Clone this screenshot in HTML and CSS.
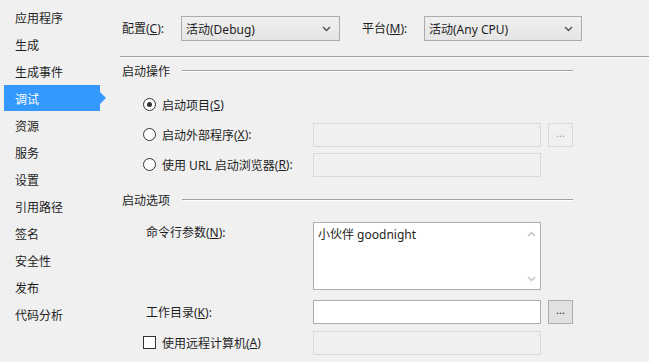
FILE: index.html
```html
<!DOCTYPE html>
<html lang="zh-CN">
  <head>
    <meta charset="UTF-8" />
    <title>项目属性</title>
    <link rel="stylesheet" href="styles.css">
  </head>
  <body>
    <div class="page">
      <ul class="nav">
        <li>应用程序</li>
        <li>生成</li>
        <li>生成事件</li>
        <li class="active">调试</li>
        <li>资源</li>
        <li>服务</li>
        <li>设置</li>
        <li>引用路径</li>
        <li>签名</li>
        <li>安全性</li>
        <li>发布</li>
        <li>代码分析</li>
      </ul>

      <div class="main">
        <div class="toprow">
          <span class="toplabel cfg">配置(<u>C</u>):</span>
          <div class="combo cfgbox">
            <span>活动(Debug)</span>
            <svg width="9" height="6" viewBox="0 0 9 6"><path d="M1 1 L4.5 4.5 L8 1" fill="none" stroke="#555" stroke-width="1.5"/></svg>
          </div>
          <span class="toplabel plat">平台(<u>M</u>):</span>
          <div class="combo platbox">
            <span>活动(Any CPU)</span>
            <svg width="9" height="6" viewBox="0 0 9 6"><path d="M1 1 L4.5 4.5 L8 1" fill="none" stroke="#555" stroke-width="1.5"/></svg>
          </div>
        </div>

        <div class="sep"></div>

        <div class="group-head first"><span>启动操作</span><div class="rule"></div></div>

        <div class="row r1">
          <label class="opt"><span class="radio on"></span>启动项目(<u>S</u>)</label>
        </div>
        <div class="row">
          <label class="opt"><span class="radio"></span>启动外部程序(<u>X</u>):</label>
          <div class="box off"></div>
          <div class="dots off">...</div>
        </div>
        <div class="row">
          <label class="opt"><span class="radio"></span>使用 URL 启动浏览器(<u>R</u>):</label>
          <div class="box off"></div>
        </div>

        <div class="group-head second"><span>启动选项</span><div class="rule"></div></div>

        <div class="row args">
          <label class="field-label">命令行参数(<u>N</u>):</label>
          <div class="memo">
            <div class="memo-text">小伙伴 goodnight</div>
            <div class="scroll">
              <svg width="9" height="6" viewBox="0 0 9 6"><path d="M1 5 L4.5 1.5 L8 5" fill="none" stroke="#c4c4c4" stroke-width="1.5"/></svg>
              <svg width="9" height="6" viewBox="0 0 9 6"><path d="M1 1 L4.5 4.5 L8 1" fill="none" stroke="#c4c4c4" stroke-width="1.5"/></svg>
            </div>
          </div>
        </div>
        <div class="row wd">
          <label class="field-label">工作目录(<u>K</u>):</label>
          <div class="box"></div>
          <div class="dots">...</div>
        </div>
        <div class="row remote">
          <label class="opt"><span class="check"></span>使用远程计算机(<u>A</u>)</label>
          <div class="box off"></div>
        </div>
      </div>
    </div>
  </body>
</html>
```

FILE: styles.css
```css
body {
  margin: 0;
  background-color: #f0f0f0;
  font-family: "Noto Sans", "Noto Sans CJK SC", sans-serif;
  font-size: 12px;
  color: #1e1e1e;
}

.page {
  display: flex;
  height: 362px;
  overflow: hidden;
}

/* left tabs */
.nav {
  list-style: none;
  margin: 0;
  padding: 4px 0 0 0;
  width: 110px;
  flex-shrink: 0;
}

.nav li {
  height: 25px;
  padding-top: 2px;
  line-height: 25px;
  padding-left: 15px;
  position: relative;
}

.nav li.active {
  background-color: #3399ff;
  color: #fff;
  margin-left: 4px;
  padding-left: 11px;
  width: 85px;
  height: 24px;
  margin-bottom: 1px;
}

.nav li.active::after {
  content: "";
  position: absolute;
  right: -6px;
  top: 7px;
  border-left: 6px solid #3399ff;
  border-top: 6px solid transparent;
  border-bottom: 6px solid transparent;
}

/* right side */
.main {
  padding: 16px 0 0 12px;
  width: 527px;
}

.toprow {
  display: flex;
  align-items: center;
  height: 25px;
}

.toplabel {
  line-height: 25px;
}

.cfg { width: 59px; }
.plat { width: 62px; margin-left: 22px; }

.combo {
  border: 1px solid #acacac;
  background: linear-gradient(#f0f0f0, #e5e5e5);
  display: flex;
  align-items: center;
  justify-content: space-between;
  padding: 0 8px 0 4px;
  box-sizing: border-box;
  height: 25px;
}

.cfgbox { width: 159px; }
.platbox { width: 158px; }

.sep {
  margin: 15px 0 0 -2px;
  width: 539px;
  border-top: 1px solid #a0a0a0;
  border-bottom: 1px solid #fff;
}

.group-head {
  display: flex;
  align-items: center;
  height: 16px;
  width: 451px;
}

.group-head.first { margin-top: 5px; }
.group-head.second { margin-top: 15px; }

.rule {
  flex: 1;
  margin-left: 12px;
  border-top: 1px solid #a0a0a0;
  border-bottom: 1px solid #fff;
}

.row {
  display: flex;
  align-items: center;
  height: 25px;
  margin-top: 5px;
}

.row.r1 { margin-top: 13px; }

.opt {
  width: 191px;
  padding-left: 21px;
  box-sizing: border-box;
  display: flex;
  align-items: center;
}

.radio {
  width: 11px;
  height: 11px;
  border: 1px solid #333;
  border-radius: 50%;
  background: #fff;
  margin-right: 6px;
  position: relative;
}

.radio.on::after {
  content: "";
  position: absolute;
  left: 3px;
  top: 3px;
  width: 5px;
  height: 5px;
  border-radius: 50%;
  background: #333;
}

.check {
  width: 11px;
  height: 11px;
  border: 1px solid #333;
  background: #fff;
  margin-right: 6px;
}

.box {
  width: 228px;
  height: 24px;
  box-sizing: border-box;
  border: 1px solid #abadb3;
  background: #fff;
}

.box.off {
  border-color: #d9d9d9;
  background: #f0f0f0;
}

.dots {
  width: 25px;
  height: 24px;
  margin-left: 7px;
  box-sizing: border-box;
  border: 1px solid #adadad;
  background: #e1e1e1;
  text-align: center;
  line-height: 18px;
  font-size: 11px;
}

.dots.off {
  border-color: #d9d9d9;
  background: #f0f0f0;
  color: #a0a0a0;
}

.field-label {
  width: 191px;
  padding-left: 24px;
  box-sizing: border-box;
}

.row.args {
  margin-top: 14px;
  height: 68px;
  align-items: flex-start;
}

.row.args .field-label {
  padding-top: 1px;
}

.memo {
  width: 228px;
  height: 68px;
  box-sizing: border-box;
  border: 1px solid #abadb3;
  background: #fff;
  display: flex;
}

.memo-text {
  flex: 1;
  padding: 2px 0 0 4px;
}

.scroll {
  width: 17px;
  display: flex;
  flex-direction: column;
  justify-content: space-between;
  align-items: center;
  padding: 8px 0 7px 0;
}

.row.wd { margin-top: 9px; }
.row.remote { margin-top: 6px; }
```
